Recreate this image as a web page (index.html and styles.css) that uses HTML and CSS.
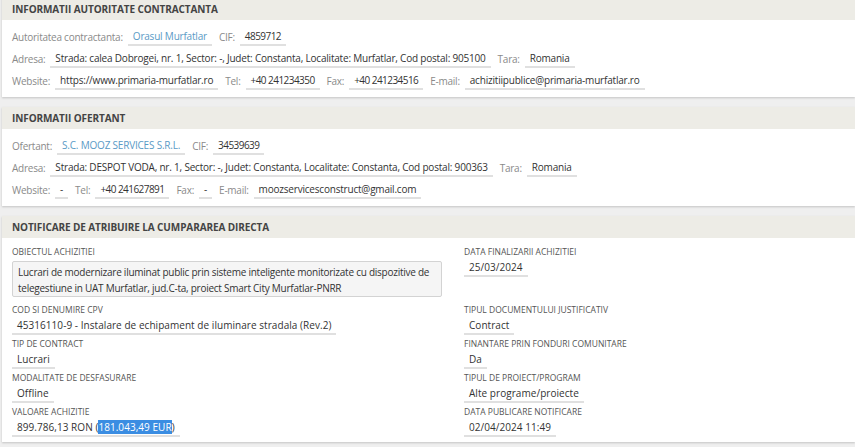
FILE: index.html
```html
<!DOCTYPE html>
<html>
<head>
<meta charset="utf-8">
<link rel="stylesheet" href="styles.css">
</head>
<body>
<div class="page">
  <section class="panel panel-first">
    <div class="panel-head">INFORMATII AUTORITATE CONTRACTANTA</div>
    <div class="panel-body">
      <div class="row">
        <span class="lbl">Autoritatea contractanta:</span><span class="val link">Orasul Murfatlar</span>
        <span class="lbl">CIF:</span><span class="val num">4859712</span>
      </div>
      <div class="row">
        <span class="lbl">Adresa:</span><span class="val">Strada: calea Dobrogei, nr. 1, Sector: -, Judet: Constanta, Localitate: Murfatlar, Cod postal: 905100</span>
        <span class="lbl">Tara:</span><span class="val">Romania</span>
      </div>
      <div class="row">
        <span class="lbl">Website:</span><span class="val">https://www.primaria-murfatlar.ro</span>
        <span class="lbl">Tel:</span><span class="val num">+40 241234350</span>
        <span class="lbl">Fax:</span><span class="val num">+40 241234516</span>
        <span class="lbl">E-mail:</span><span class="val">achizitiipublice@primaria-murfatlar.ro</span>
      </div>
    </div>
  </section>

  <section class="panel">
    <div class="panel-head">INFORMATII OFERTANT</div>
    <div class="panel-body">
      <div class="row">
        <span class="lbl">Ofertant:</span><span class="val link">S.C. MOOZ SERVICES S.R.L.</span>
        <span class="lbl">CIF:</span><span class="val num">34539639</span>
      </div>
      <div class="row">
        <span class="lbl">Adresa:</span><span class="val">Strada: DESPOT VODA, nr. 1, Sector: -, Judet: Constanta, Localitate: Constanta, Cod postal: 900363</span>
        <span class="lbl">Tara:</span><span class="val">Romania</span>
      </div>
      <div class="row">
        <span class="lbl">Website:</span><span class="val">-</span>
        <span class="lbl">Tel:</span><span class="val num">+40 241627891</span>
        <span class="lbl">Fax:</span><span class="val">-</span>
        <span class="lbl">E-mail:</span><span class="val">moozservicesconstruct@gmail.com</span>
      </div>
    </div>
  </section>

  <section class="panel">
    <div class="panel-head">NOTIFICARE DE ATRIBUIRE LA CUMPARAREA DIRECTA</div>
    <div class="panel-body grid">
      <div class="field">
        <div class="flbl">OBIECTUL ACHIZITIEI</div>
        <div class="textbox">Lucrari de modernizare iluminat public prin sisteme inteligente monitorizate cu dispozitive de telegestiune in UAT Murfatlar, jud.C-ta, proiect Smart City Murfatlar-PNRR</div>
      </div>
      <div class="field">
        <div class="flbl">DATA FINALIZARII ACHIZITIEI</div>
        <span class="fval">25/03/2024</span>
      </div>
      <div class="field">
        <div class="flbl">COD SI DENUMIRE CPV</div>
        <span class="fval">45316110-9 - Instalare de echipament de iluminare stradala (Rev.2)</span>
      </div>
      <div class="field">
        <div class="flbl">TIPUL DOCUMENTULUI JUSTIFICATIV</div>
        <span class="fval">Contract</span>
      </div>
      <div class="field">
        <div class="flbl">TIP DE CONTRACT</div>
        <span class="fval">Lucrari</span>
      </div>
      <div class="field">
        <div class="flbl">FINANTARE PRIN FONDURI COMUNITARE</div>
        <span class="fval">Da</span>
      </div>
      <div class="field">
        <div class="flbl">MODALITATE DE DESFASURARE</div>
        <span class="fval">Offline</span>
      </div>
      <div class="field">
        <div class="flbl">TIPUL DE PROIECT/PROGRAM</div>
        <span class="fval">Alte programe/proiecte</span>
      </div>
      <div class="field">
        <div class="flbl">VALOARE ACHIZITIE</div>
        <span class="fval">899.786,13 RON (<span class="sel">181.043,49 EUR</span>)</span>
      </div>
      <div class="field">
        <div class="flbl">DATA PUBLICARE NOTIFICARE</div>
        <span class="fval">02/04/2024 11:49</span>
      </div>
    </div>
  </section>
</div>
</body>
</html>
```

FILE: styles.css
```css
* { box-sizing: border-box; }
html, body { margin: 0; padding: 0; }
body {
  background: #efefef;
  font-family: "Open Sans", "DejaVu Sans", sans-serif;
  font-size: 10px;
  color: #333;
  width: 855px;
  height: 447px;
  overflow: hidden;
}
.page {
  padding: 0 0 0 2px;
  display: flex;
  flex-direction: column;
  gap: 10px;
}
.panel {
  background: #fff;
  box-shadow: 0 1px 2px rgba(0,0,0,0.18);
}
.panel-first { margin-top: -2px; }
.panel-head {
  height: 22px;
  line-height: 22px;
  background: #edece6;
  padding-left: 10px;
  font-weight: 700;
  font-size: 10px;
  letter-spacing: -0.1px;
  color: #444;
}
.panel-body {
  padding: 6px 10px 5px 9px;
}
.row {
  height: 22px;
  display: flex;
  align-items: center;
  gap: 5px;
}
.lbl {
  color: #8a8a8a;
  letter-spacing: -0.25px;
  margin-left: 1px;
}
.val {
  padding: 1px 5px 1px 5px;
  border-bottom: 2px solid #e0e0e0;
  line-height: 14px;
  color: #333;
  letter-spacing: -0.2px;
  margin-right: 1px;
}
.val.num { letter-spacing: -0.55px; }
.val.link { color: #5a9ac6; }
.grid {
  display: grid;
  grid-template-columns: 452px 1fr;
  row-gap: 3px;
  padding: 8px 10px 5px 10px;
}
.field { display: flex; flex-direction: column; align-items: flex-start; }
.flbl {
  font-size: 8.5px;
  line-height: 12px;
  height: 12px;
  color: #555;
  margin-bottom: 1px;
}
.fval {
  display: inline-block;
  line-height: 16px;
  padding: 0 5px;
  border-bottom: 2px solid #e0e0e0;
  color: #333;
  font-size: 10px;
  letter-spacing: 0.05px;
}
.textbox {
  margin-top: 2px;
  margin-bottom: 4px;
  width: 430px;
  height: 36px;
  padding: 2px 0 2px 5px;
  background: #f5f5f5;
  border: 1px solid #d3d3d3;
  border-radius: 2px;
  line-height: 16px;
  font-size: 10px;
  letter-spacing: -0.25px;
  color: #333;
}
.sel {
  background: #3b8de2;
  color: #fff;
}
```
